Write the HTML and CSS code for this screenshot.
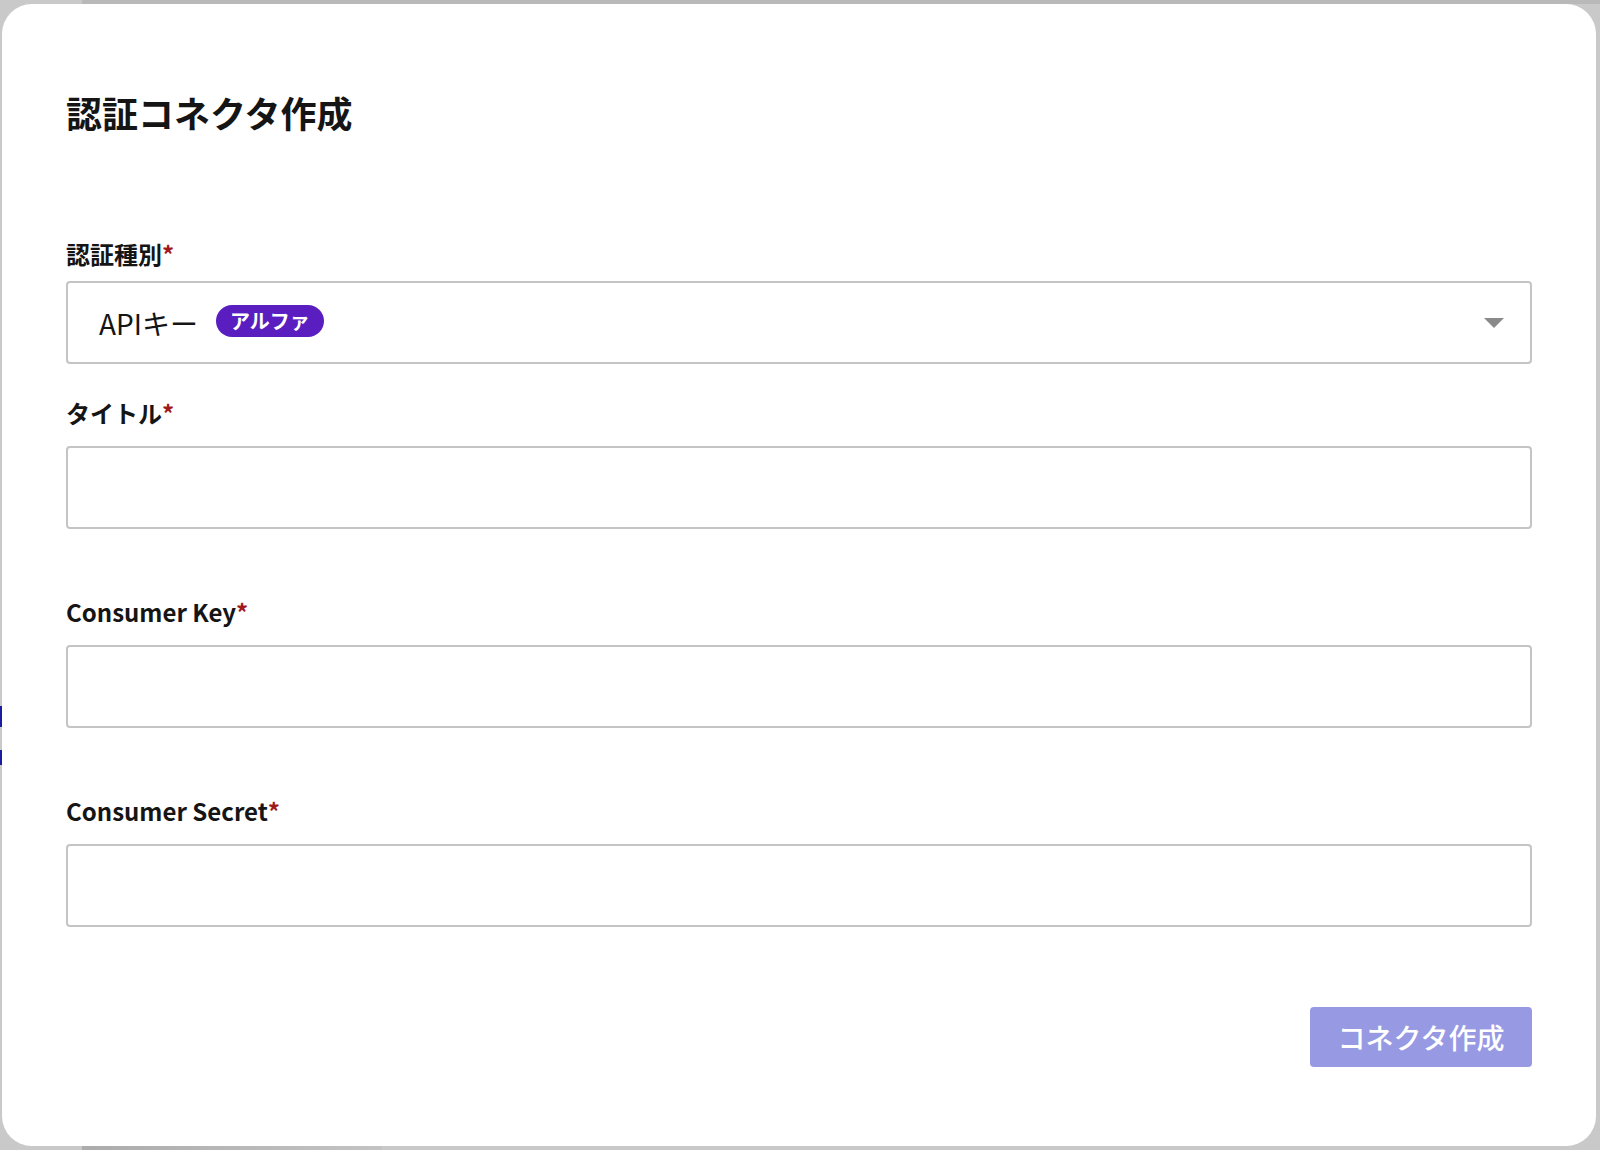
FILE: index.html
```html
<!DOCTYPE html>
<html lang="ja">
<head>
    <meta charset="UTF-8">
    <meta name="viewport" content="width=device-width, initial-scale=1.0">
    <title>認証コネクタ作成</title>
    <link rel="stylesheet" href="styles.css">
</head>
<body>
    <div class="modal">
        <h1 class="modal-title">認証コネクタ作成</h1>

        <div class="field field-select">
            <label class="field-label">認証種別<span class="required">*</span></label>
            <div class="select-box">
                <span class="select-value">APIキー</span>
                <span class="badge">アルファ</span>
                <svg class="select-arrow" width="20" height="10" viewBox="0 0 20 10">
                    <polygon points="0,0 20,0 10,10" fill="#8a8a8a"/>
                </svg>
            </div>
        </div>

        <div class="field">
            <label class="field-label" for="title">タイトル<span class="required">*</span></label>
            <input class="text-input" type="text" id="title">
        </div>

        <div class="field">
            <label class="field-label" for="consumerKey">Consumer Key<span class="required">*</span></label>
            <input class="text-input" type="text" id="consumerKey">
        </div>

        <div class="field field-last">
            <label class="field-label" for="consumerSecret">Consumer Secret<span class="required">*</span></label>
            <input class="text-input" type="text" id="consumerSecret">
        </div>

        <div class="actions">
            <button class="submit-btn" disabled>コネクタ作成</button>
        </div>
    </div>
</body>
</html>
```

FILE: styles.css
```css
* {
    box-sizing: border-box;
}
body {
    margin: 0;
    padding: 4px 4px 0 2px;
    height: 1150px;
    overflow: hidden;
    font-family: "Noto Sans CJK JP", "Noto Sans", sans-serif;
    color: #151515;
    background-color: #c9c9c9;
    background-image:
        linear-gradient(#b9b9b9, #b9b9b9),
        linear-gradient(to right, #acacac, #c3c3c3),
        linear-gradient(#1c1ca0, #1c1ca0),
        linear-gradient(#1c1ca0, #1c1ca0);
    background-position: 82px 0, 82px 100%, 0 706px, 0 750px;
    background-size: 100% 4px, 300px 5px, 2px 21px, 2px 15px;
    background-repeat: no-repeat;
}
.modal {
    width: 1594px;
    padding: 84px 64px 79px 64px;
    background-color: #fff;
    border-radius: 30px;
    display: flex;
    flex-direction: column;
}
.modal-title {
    margin: 0 0 102px 0;
    font-size: 36px;
    line-height: 48px;
    font-weight: 700;
}
.field {
    display: flex;
    flex-direction: column;
    gap: 17px;
    margin-bottom: 67px;
}
.field-select {
    gap: 11px;
    margin-bottom: 33px;
}
.field-last {
    margin-bottom: 80px;
}
.field-label {
    font-size: 24px;
    line-height: 32px;
    font-weight: 700;
}
.required {
    color: #a11a1a;
}
.select-box {
    display: flex;
    align-items: center;
    height: 83px;
    padding: 0 26px 0 31px;
    border: 2px solid #c4c4c4;
    border-radius: 4px;
}
.select-value {
    font-size: 28px;
    line-height: 1;
}
.badge {
    margin-left: 18px;
    margin-bottom: 4px;
    height: 32px;
    padding: 0 14px;
    display: flex;
    align-items: center;
    border-radius: 16px;
    background-color: #5a1ec0;
    color: #fff;
    font-size: 20px;
    font-weight: 700;
}
.select-arrow {
    margin-left: auto;
}
.text-input {
    height: 83px;
    border: 2px solid #c4c4c4;
    border-radius: 4px;
    font-family: inherit;
    font-size: 24px;
    padding: 0 30px;
    outline: none;
}
.actions {
    display: flex;
    justify-content: flex-end;
}
.submit-btn {
    height: 60px;
    width: 222px;
    padding: 0;
    border: none;
    border-radius: 4px;
    background-color: #9799e3;
    color: #fff;
    font-family: inherit;
    font-size: 28px;
    font-weight: 500;
}
```
